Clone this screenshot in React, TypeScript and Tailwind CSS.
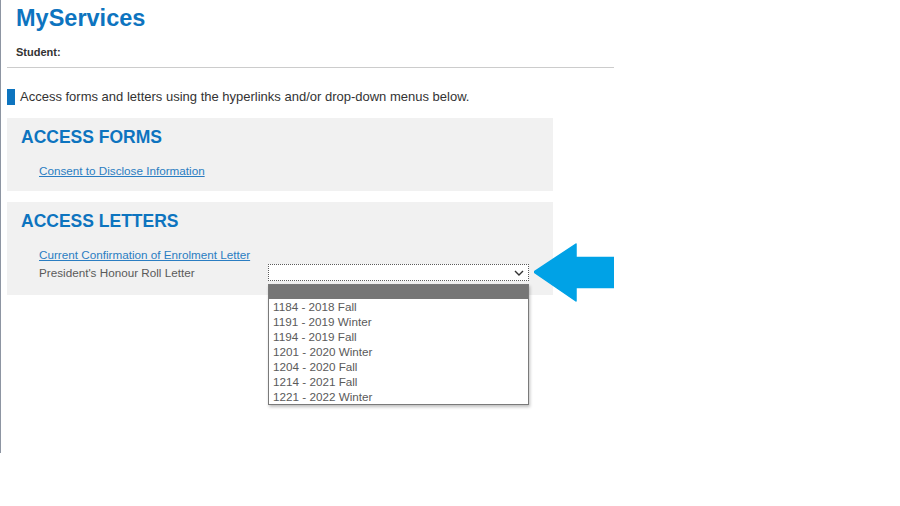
import React from "react";

const terms = [
  "1184 - 2018 Fall",
  "1191 - 2019 Winter",
  "1194 - 2019 Fall",
  "1201 - 2020 Winter",
  "1204 - 2020 Fall",
  "1214 - 2021 Fall",
  "1221 - 2022 Winter"
];

const Arrow: React.FC = () => (
  <svg width="80" height="59" viewBox="0 0 80 59" className="block">
    <polygon
      points="0,29 42,1 42,14.5 80,14.5 80,44.5 42,44.5 42,58"
      fill="#00a2e6"
      stroke="#00a2e6"
      strokeWidth="1.5"
      strokeLinejoin="round"
    />
  </svg>
);

const TermSelect: React.FC = () => (
  <div className="relative">
    <div className="w-[261px] h-[17px] bg-white border border-dotted border-[#5c5c5c] flex items-center justify-end pr-[4px]">
      <svg width="10" height="6" viewBox="0 0 10 6">
        <path d="M1 1l4 4 4-4" fill="none" stroke="#333" strokeWidth="1.4" />
      </svg>
    </div>

    {/* open option list */}
    <div className="absolute left-0 top-[20px] w-[261px] bg-white border border-[#7a7a7a] shadow-[1px_2px_3px_rgba(0,0,0,0.25)] z-10">
      <div className="h-[14px] bg-[#767676]" />
      {terms.map((term) => (
        <div key={term} className="h-[15px] leading-[15px] pl-[4px] text-[11.7px] text-[#5a5a5a]">
          {term}
        </div>
      ))}
    </div>

    <div className="absolute left-[266px] top-[-21px]">
      <Arrow />
    </div>
  </div>
);

export default function App() {
  return (
    <div className="w-[900px] h-[506px] bg-white font-['Liberation_Sans',Arial,sans-serif]">
      <div className="w-[614px] h-[453px] border-l border-[#8d95a2] pl-[6px]">
        <h1 className="pl-[9px] pt-[4px] text-[23.5px] leading-[28px] font-bold text-[#0d74bf]">
          MyServices
        </h1>
        <p className="pl-[9px] mt-[13px] text-[11px] leading-[14px] font-bold text-[#333]">
          Student:
        </p>
        <hr className="mt-[8px] border-0 border-t border-[#cccccc]" />

        <div className="mt-[21px] flex items-center h-[16px]">
          <span className="w-[8px] h-[16px] bg-[#0d74bf]" />
          <span className="ml-[5px] text-[13px] leading-[16px] text-[#333]">
            Access forms and letters using the hyperlinks and/or drop-down menus below.
          </span>
        </div>

        <section className="mt-[13px] w-[546px] bg-[#f1f1f1] pl-[14px] pt-[9px] pb-[13px]">
          <h2 className="text-[17.5px] leading-[20px] font-bold text-[#0d74bf]">ACCESS FORMS</h2>
          <div className="mt-[17px] pl-[18px] text-[11.7px] leading-[14px]">
            <a href="#" className="text-[#2a7dc2] underline">
              Consent to Disclose Information
            </a>
          </div>
        </section>

        <section className="mt-[11px] w-[546px] bg-[#f1f1f1] pl-[14px] pt-[9px] pb-[14px]">
          <h2 className="text-[17.5px] leading-[20px] font-bold text-[#0d74bf]">ACCESS LETTERS</h2>
          <div className="mt-[17px] pl-[18px] text-[11.7px] leading-[14px]">
            <a href="#" className="text-[#2a7dc2] underline">
              Current Confirmation of Enrolment Letter
            </a>
          </div>
          <div className="mt-[2px] pl-[18px] flex items-center h-[17px] text-[11.7px] leading-[14px]">
            <span className="w-[229px] text-[#5a5a5a]">President's Honour Roll Letter</span>
            <TermSelect />
          </div>
        </section>
      </div>
    </div>
  );
}
